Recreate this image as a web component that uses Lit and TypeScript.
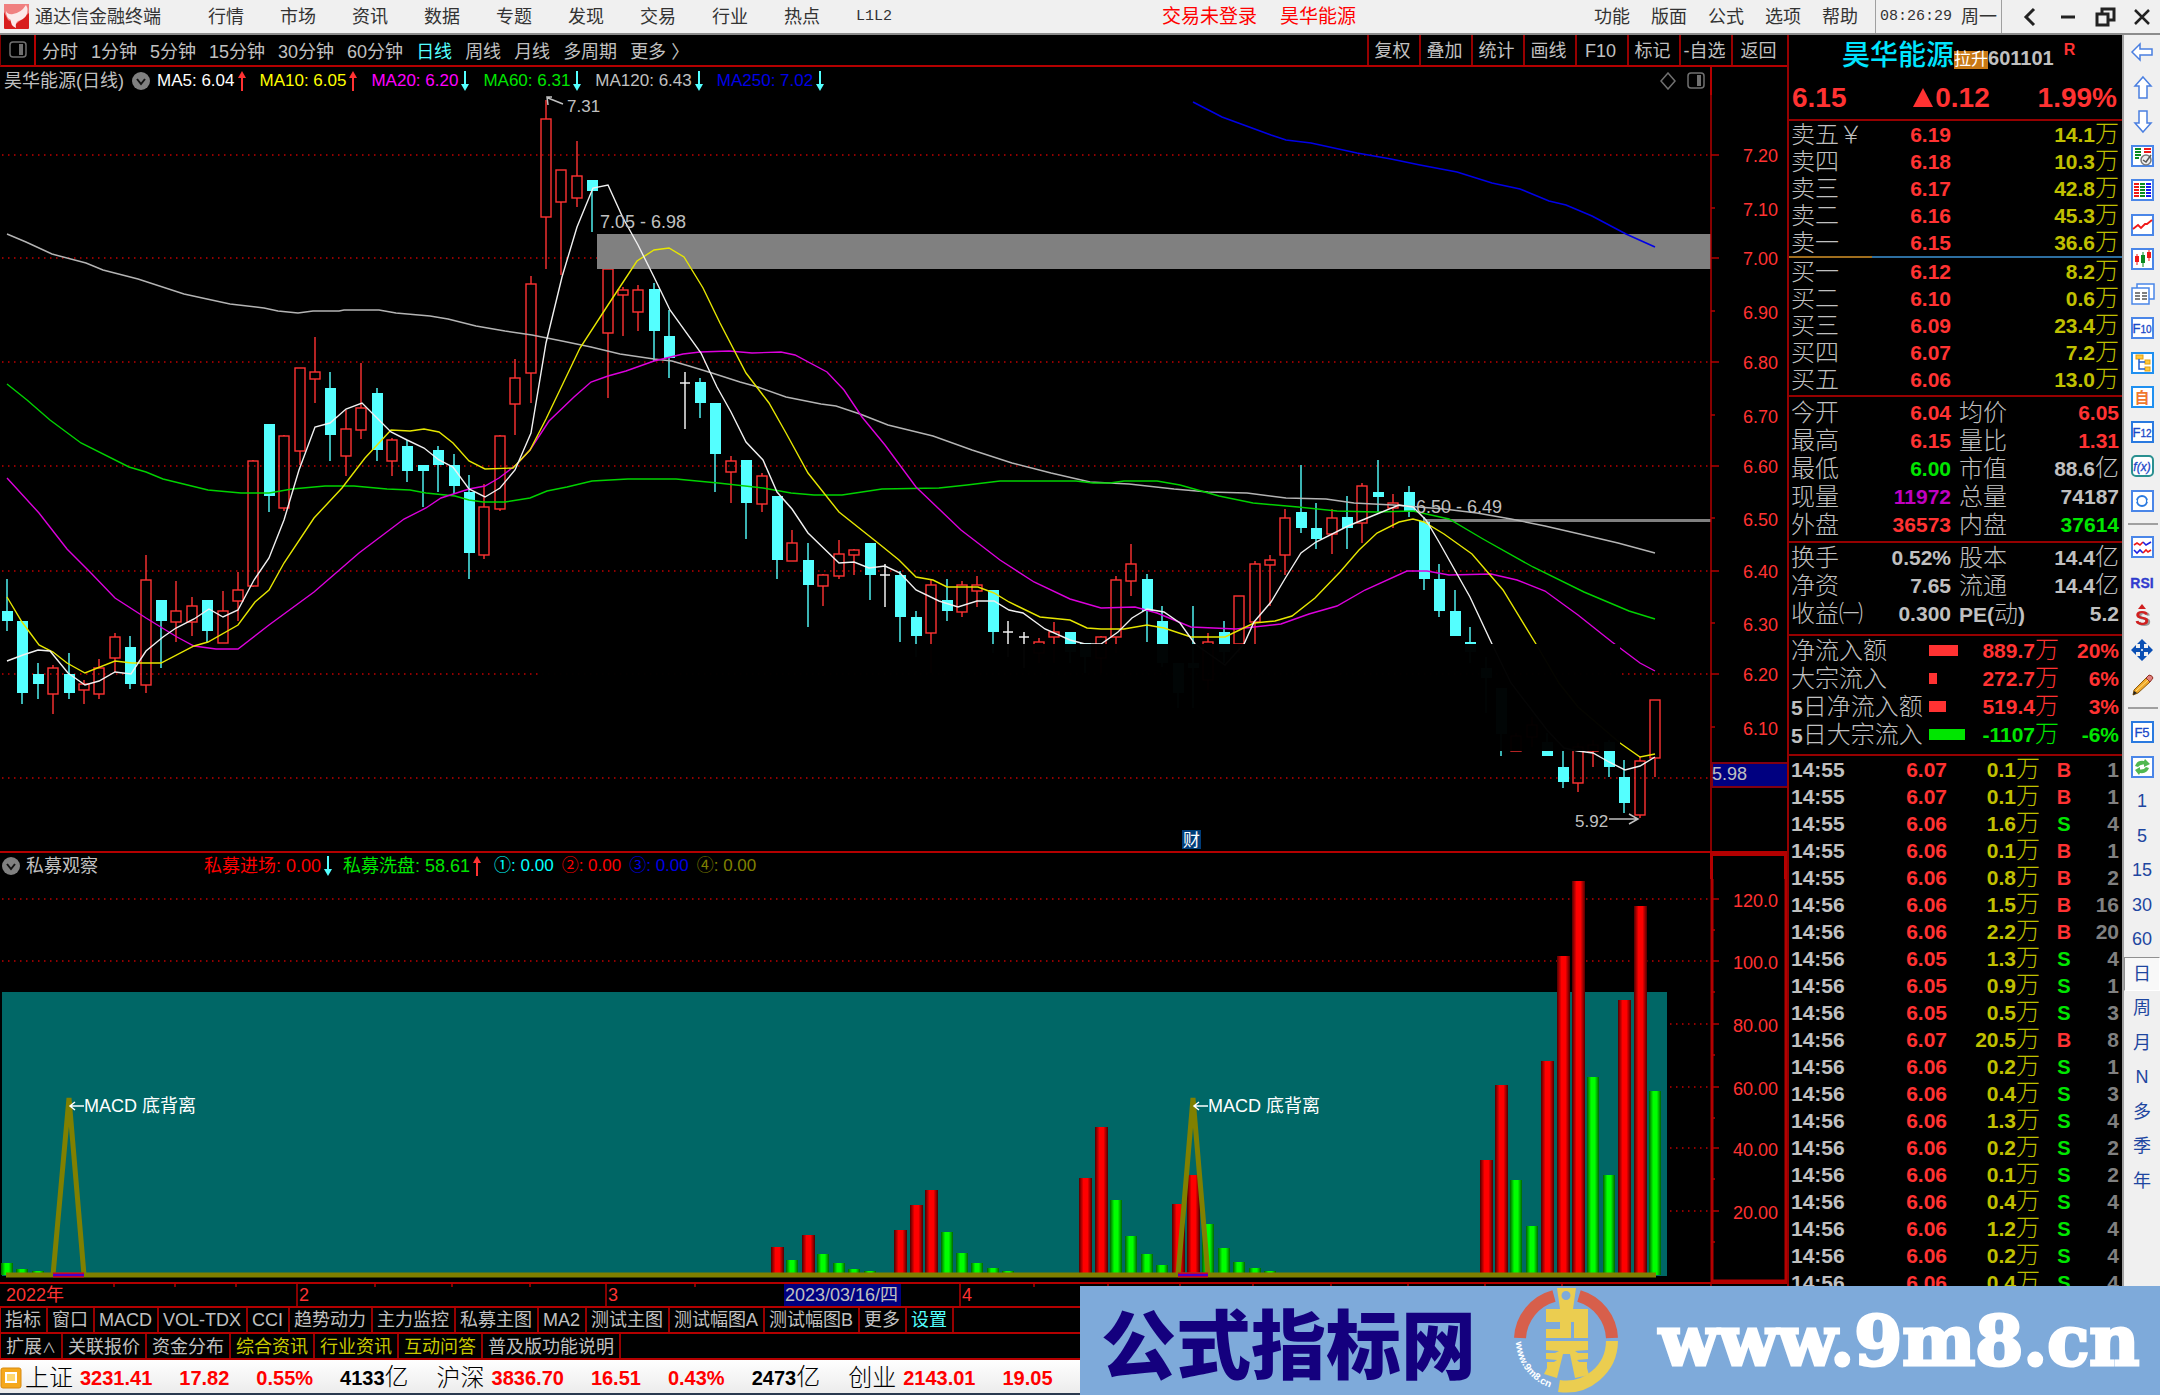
import { LitElement, html, svg, css, nothing } from "lit";
import { customElement } from "lit/decorators.js";
import { styleMap } from "lit/directives/style-map.js";

/* ---------- data ---------- */

type Candle = [kind: "u" | "d" | "x", high: number, top: number, bottom: number, low: number];

// One entry per session. Vertical units are thirds of a plot unit.
const CANDLES: Candle[] = [
  ["d", 1738, 1832, 1863, 1894], ["d", 1863, 1863, 2079, 2111], ["d", 1990, 2021, 2053, 2096],
  ["u", 1995, 2005, 2083, 2141], ["d", 1958, 2021, 2079, 2096], ["u", 2040, 2053, 2069, 2111],
  ["u", 1976, 2005, 2083, 2096], ["u", 1900, 1910, 1975, 2016], ["d", 1909, 1941, 2052, 2066],
  ["u", 1666, 1739, 2056, 2080], ["d", 1801, 1801, 1863, 2003], ["u", 1743, 1833, 1867, 1926],
  ["u", 1792, 1819, 1867, 1908], ["d", 1801, 1801, 1894, 1926], ["u", 1774, 1833, 1930, 1930],
  ["u", 1715, 1771, 1804, 1864], ["u", 1381, 1384, 1758, 1762], ["d", 1273, 1273, 1489, 1535],
  ["u", 1306, 1307, 1525, 1533], ["u", 1104, 1104, 1353, 1395], ["u", 1012, 1117, 1138, 1210],
  ["d", 1116, 1165, 1305, 1382], ["u", 1230, 1288, 1367, 1427], ["u", 1088, 1225, 1291, 1318],
  ["d", 1163, 1179, 1350, 1382], ["u", 1315, 1321, 1384, 1427], ["d", 1320, 1337, 1413, 1445],
  ["d", 1396, 1396, 1413, 1522], ["d", 1337, 1351, 1394, 1477], ["d", 1363, 1396, 1458, 1483],
  ["d", 1426, 1476, 1660, 1738], ["u", 1453, 1522, 1665, 1678], ["u", 1304, 1307, 1526, 1533],
  ["u", 1076, 1135, 1213, 1305], ["u", 828, 852, 1119, 1210], ["u", 300, 357, 651, 806],
  ["u", 510, 510, 606, 825], ["u", 423, 528, 594, 620], ["d", 540, 540, 572, 697],
  ["u", 806, 806, 998, 1193], ["u", 860, 870, 886, 1007], ["u", 855, 870, 935, 994],
  ["d", 850, 868, 994, 1084], ["d", 930, 1009, 1074, 1134], ["x", 1117, 1149, 1151, 1287],
  ["d", 1134, 1147, 1210, 1255], ["d", 1210, 1210, 1363, 1476], ["u", 1368, 1384, 1417, 1508],
  ["d", 1381, 1381, 1508, 1616], ["u", 1418, 1429, 1512, 1535], ["d", 1489, 1489, 1679, 1738],
  ["u", 1589, 1630, 1682, 1682], ["d", 1630, 1679, 1755, 1881], ["u", 1723, 1725, 1759, 1819],
  ["u", 1620, 1663, 1727, 1738], ["u", 1647, 1650, 1665, 1724], ["d", 1630, 1630, 1724, 1801],
  ["x", 1693, 1725, 1728, 1820], ["d", 1712, 1725, 1850, 1927], ["d", 1832, 1850, 1909, 1970],
  ["u", 1740, 1756, 1899, 2020], ["d", 1738, 1801, 1832, 1863], ["u", 1743, 1756, 1836, 1850],
  ["u", 1729, 1756, 1772, 1820], ["d", 1769, 1769, 1895, 1960], ["x", 1863, 1897, 1900, 1970],
  ["x", 1895, 1910, 1913, 2003], ["u", 1913, 1927, 1960, 1990], ["u", 1867, 1895, 1911, 1990],
  ["d", 1895, 1895, 1955, 1990], ["d", 1930, 1930, 1970, 2020], ["u", 1909, 1910, 1975, 2020],
  ["u", 1729, 1739, 1911, 1960], ["u", 1633, 1693, 1742, 1787], ["d", 1723, 1738, 1832, 1927],
  ["d", 1819, 1863, 1990, 2000], ["d", 1990, 1990, 2080, 2125], ["d", 1819, 1990, 2003, 2125],
  ["u", 1900, 1927, 2040, 2070], ["d", 1863, 1895, 1955, 1990], ["u", 1788, 1789, 1932, 1960],
  ["u", 1684, 1693, 1866, 1931], ["u", 1666, 1681, 1696, 1817], ["u", 1527, 1555, 1665, 1725],
  ["d", 1396, 1536, 1584, 1598], ["d", 1508, 1585, 1616, 1647], ["u", 1527, 1555, 1602, 1661],
  ["d", 1489, 1552, 1584, 1647], ["u", 1450, 1459, 1570, 1630], ["d", 1381, 1477, 1490, 1536],
  ["u", 1481, 1510, 1525, 1584], ["d", 1458, 1477, 1532, 1552], ["d", 1550, 1562, 1738, 1770],
  ["d", 1693, 1738, 1832, 1850], ["d", 1770, 1832, 1909, 1909], ["d", 1882, 1927, 1955, 1990],
  ["d", 1970, 2003, 2035, 2140], ["d", 2065, 2065, 2203, 2268], ["u", 2200, 2207, 2254, 2254],
  ["u", 2150, 2175, 2210, 2240], ["d", 2200, 2225, 2268, 2268], ["d", 2254, 2300, 2345, 2363],
  ["u", 2230, 2240, 2348, 2376], ["u", 2220, 2235, 2254, 2300], ["d", 2220, 2225, 2300, 2331],
  ["d", 2281, 2332, 2408, 2439], ["u", 2270, 2284, 2444, 2453], ["u", 2099, 2099, 2273, 2331],
];

const MA_LINES: { color: string; points: string }[] = [
  { color: "#0000e6", points: "1193,307 1222,350 1271,405 1286,420 1311,430 1357,460 1391,478 1420,495 1457,517 1492,548 1520,567 1549,603 1566,615 1592,648 1626,702 1655,741" },
  { color: "#b4b4b4", points: "7,703 26,725 52,762 86,790 103,811 138,838 184,883 230,911 264,925 278,934 298,938 313,934 339,934 344,929 379,929 396,938 430,947 448,957 476,979 505,993 532,1005 562,1022 591,1042 620,1062 654,1077 672,1083 689,1098 712,1120 740,1147 758,1162 786,1190 821,1212 836,1218 860,1243 888,1275 933,1308 972,1350 1012,1388 1051,1420 1090,1445 1129,1453 1174,1468 1208,1475 1247,1479 1286,1493 1326,1498 1354,1509 1393,1516 1444,1527 1477,1540 1511,1557 1545,1579 1584,1605 1618,1630 1655,1659" },
  { color: "#00d200", points: "7,1153 27,1200 50,1260 81,1330 129,1401 146,1415 163,1438 208,1469 241,1478 269,1478 292,1467 325,1457 354,1457 387,1468 410,1471 426,1480 455,1488 469,1500 483,1505 505,1505 530,1493 547,1473 567,1462 592,1443 628,1438 676,1438 718,1450 763,1465 791,1478 814,1484 842,1484 882,1466 939,1465 967,1454 1000,1443 1076,1443 1093,1448 1110,1448 1124,1443 1157,1443 1180,1456 1219,1487 1253,1510 1298,1521 1337,1532 1376,1537 1413,1532 1449,1558 1483,1618 1533,1700 1584,1777 1629,1833 1655,1857" },
  { color: "#dc00dc", points: "7,1433 39,1540 67,1647 90,1715 115,1795 146,1855 177,1910 194,1938 216,1946 238,1946 269,1875 314,1775 359,1660 404,1557 426,1525 441,1495 469,1467 485,1457 499,1435 516,1396 530,1350 549,1262 574,1190 591,1147 608,1128 626,1113 654,1083 683,1062 700,1055 729,1052 752,1058 781,1055 795,1065 827,1115 844,1170 862,1250 885,1335 916,1462 961,1590 1000,1680 1034,1745 1070,1798 1101,1825 1135,1820 1157,1840 1191,1880 1236,1887 1281,1872 1309,1842 1337,1817 1365,1770 1407,1714 1427,1714 1449,1725 1491,1722 1517,1741 1545,1773 1578,1845 1612,1925 1640,1989 1655,2012" },
  { color: "#e6e600", points: "7,1790 22,1865 39,1935 53,1955 67,1990 85,2018 115,1983 132,1988 161,1988 194,1938 208,1927 238,1875 255,1805 269,1770 284,1690 314,1555 342,1465 365,1375 391,1290 410,1294 424,1286 439,1295 453,1330 469,1383 485,1406 513,1404 530,1350 546,1258 580,1045 608,915 637,783 654,750 669,744 684,770 703,865 720,970 746,1120 769,1210 786,1300 808,1420 839,1535 878,1630 899,1680 916,1730 933,1740 947,1762 978,1762 994,1780 1009,1807 1040,1852 1070,1860 1087,1884 1101,1888 1124,1887 1147,1875 1164,1883 1191,1910 1225,1910 1254,1870 1275,1863 1292,1848 1315,1795 1340,1715 1359,1650 1377,1600 1399,1567 1413,1558 1424,1565 1444,1602 1472,1662 1503,1770 1536,1931 1559,2050 1578,2120 1620,2228 1640,2270 1655,2262" },
  { color: "#f0f0f0", points: "7,1983 23,1965 38,1950 50,1953 68,2020 85,2055 99,2042 115,2015 131,2023 146,1952 163,1910 176,1885 194,1858 209,1828 223,1851 238,1830 254,1740 269,1675 284,1560 299,1410 315,1280 330,1268 346,1226 362,1208 376,1250 391,1295 407,1320 424,1345 439,1380 453,1400 469,1467 485,1492 500,1465 515,1410 531,1300 546,1030 562,830 577,680 593,565 608,555 623,655 638,735 654,830 670,930 701,1060 717,1160 731,1235 746,1325 763,1380 777,1475 792,1527 808,1600 839,1690 854,1686 869,1703 885,1698 900,1720 916,1770 939,1803 958,1822 977,1803 994,1803 1009,1830 1023,1840 1045,1888 1070,1920 1085,1932 1101,1932 1118,1895 1132,1855 1147,1828 1164,1835 1180,1870 1195,1931 1225,1995 1244,1931 1254,1865 1271,1805 1286,1730 1301,1660 1316,1625 1348,1578 1377,1543 1399,1516 1413,1520 1426,1560 1439,1625 1470,1790 1492,1931 1511,2050 1547,2190 1564,2245 1578,2253 1593,2258 1609,2285 1625,2311 1640,2298 1655,2270" },
];

// [session index, top edge, rising?]
const BARS: [number, number, boolean][] = [
  [0, 1263, false], [1, 1269, false], [2, 1271, false],
  [50, 1247, true], [51, 1260, false], [52, 1235, true], [53, 1254, false], [54, 1263, false], [55, 1269, false], [56, 1271, false],
  [58, 1230, true], [59, 1205, true], [60, 1190, true], [61, 1232, false], [62, 1253, false], [63, 1263, false], [64, 1268, false], [65, 1271, false],
  [70, 1178, true], [71, 1127, true], [72, 1200, false], [73, 1236, false], [74, 1254, false], [75, 1265, false],
  [76, 1204, true], [77, 1175, true], [78, 1224, false], [79, 1248, false], [80, 1262, false], [81, 1268, false], [82, 1271, false],
  [96, 1160, true], [97, 1085, true], [98, 1180, false], [99, 1226, false], [100, 1061, true], [101, 956, true], [102, 881, true],
  [103, 1077, false], [104, 1175, false], [105, 1000, true], [106, 906, true], [107, 1091, false],
];

const PRICE_LABELS: [string, number][] = [
  ["7.20", 155], ["7.10", 208], ["7.00", 258], ["6.90", 311], ["6.80", 362], ["6.70", 415],
  ["6.60", 466], ["6.50", 518], ["6.40", 571], ["6.30", 623], ["6.20", 674], ["6.10", 727],
];
const SUB_LABELS: [string, number][] = [
  ["120.0", 899], ["100.0", 961], ["80.00", 1024], ["60.00", 1087], ["40.00", 1148], ["20.00", 1211],
];

const MENUS = ["行情", "市场", "资讯", "数据", "专题", "发现", "交易", "行业", "热点"];
const PERIODS = ["分时", "1分钟", "5分钟", "15分钟", "30分钟", "60分钟", "日线", "周线", "月线", "多周期", "更多 〉"];
const TOOLS = ["复权", "叠加", "统计", "画线", "F10", "标记", "-自选", "返回"];
const MAS: [string, string, boolean][] = [
  ["MA5: 6.04", "c-white", true], ["MA10: 6.05", "c-yel", true], ["MA20: 6.20", "c-mag", false],
  ["MA60: 6.31", "c-grn", false], ["MA120: 6.43", "c-gray", false], ["MA250: 7.02", "c-blue", false],
];
const TABS = ["指标", "窗口", "MACD", "VOL-TDX", "CCI", "趋势动力", "主力监控", "私募主图", "MA2", "测试主图", "测试幅图A", "测试幅图B", "更多", "设置"];
const TABS2 = ["扩展", "关联报价", "资金分布", "综合资讯", "行业资讯", "互动问答", "普及版功能说明"];

const SELLS = [["卖五￥", "6.19", "14.1"], ["卖四", "6.18", "10.3"], ["卖三", "6.17", "42.8"], ["卖二", "6.16", "45.3"], ["卖一", "6.15", "36.6"]];
const BUYS = [["买一", "6.12", "8.2"], ["买二", "6.10", "0.6"], ["买三", "6.09", "23.4"], ["买四", "6.07", "7.2"], ["买五", "6.06", "13.0"]];
const STATS = [
  ["今开", "6.04", "r", "均价", "6.05", "r"], ["最高", "6.15", "r", "量比", "1.31", "r"],
  ["最低", "6.00", "g", "市值", "88.6亿", "w"], ["现量", "11972", "m", "总量", "74187", "w"],
  ["外盘", "36573", "r", "内盘", "37614", "g"],
];
const STATS2 = [
  ["换手", "0.52%", "w", "股本", "14.4亿", "w"], ["净资", "7.65", "w", "流通", "14.4亿", "w"],
  ["收益㈠", "0.300", "w", "PE(动)", "5.2", "w"],
];
const FLOWS: [string, number, string, string, string][] = [
  ["净流入额", 29, "889.7", "20%", "r"], ["大宗流入", 8, "272.7", "6%", "r"],
  ["5日净流入额", 17, "519.4", "3%", "r"], ["5日大宗流入", 36, "-1107", "-6%", "g"],
];
const TICKS = [
  "14:55 6.07 0.1 B 1", "14:55 6.07 0.1 B 1", "14:55 6.06 1.6 S 4", "14:55 6.06 0.1 B 1", "14:55 6.06 0.8 B 2",
  "14:56 6.06 1.5 B 16", "14:56 6.06 2.2 B 20", "14:56 6.05 1.3 S 4", "14:56 6.05 0.9 S 1", "14:56 6.05 0.5 S 3",
  "14:56 6.07 20.5 B 8", "14:56 6.06 0.2 S 1", "14:56 6.06 0.4 S 3", "14:56 6.06 1.3 S 4", "14:56 6.06 0.2 S 2",
  "14:56 6.06 0.1 S 2", "14:56 6.06 0.4 S 4", "14:56 6.06 1.2 S 4", "14:56 6.06 0.2 S 4", "14:56 6.06 0.4 S 4",
].map((t) => t.split(" "));

const INDICES = [
  ["上证", "3231.41", "17.82", "0.55%", "4133"],
  ["沪深", "3836.70", "16.51", "0.43%", "2473"],
  ["创业", "2143.01", "19.05", "", ""],
];

/* ---------- helpers ---------- */

const FIRST_X = 7;
const STEP = 1648 / 107;
const cx = (k: number) => Math.round(FIRST_X + k * STEP);
const cy = (v: number) => Math.round(v / 3);
const linePoints = (s: string) =>
  s.split(" ").map((p) => { const [x, y] = p.split(",").map(Number); return `${x},${cy(y)}`; }).join(" ");

const frame = (stroke = "#4a86e8") => svg`<rect x="2" y="2" width="21" height="20" fill="#fff" stroke=${stroke} stroke-width="2"/>`;

const STRIP_ICONS: [string, unknown][] = [
  ["后退", svg`<path d="M2 12 L10 4 V9 H22 V15 H10 V20 Z" fill="#fff" stroke="#4a7fe0" stroke-width="1.5"/>`],
  ["上移", svg`<path d="M13 2 L21 11 H17 V23 H9 V11 H5 Z" fill="#fff" stroke="#4a7fe0" stroke-width="1.5"/>`],
  ["下移", svg`<path d="M13 23 L21 14 H17 V2 H9 V14 H5 Z" fill="#fff" stroke="#4a7fe0" stroke-width="1.5"/>`],
  ["报价", svg`${frame()}<path d="M5 5H11M5 8H11M5 11H11M5 14H9" stroke="#0a8a20" stroke-width="2"/><path d="M14 5H21M14 8H21" stroke="#f01818" stroke-width="2"/><circle cx="16" cy="16" r="5" fill="#eee" stroke="#777" stroke-width="1.5"/><path d="M13 16L16 18L21 11" fill="none" stroke="#555" stroke-width="1.5"/>`],
  ["列表", svg`${frame()}<path d="M4 6H9M4 9H9M4 12H9M4 15H9M4 18H9" stroke="#f01818" stroke-width="2"/><path d="M10 6H15M10 9H15M10 12H15M10 15H15M10 18H15" stroke="#0a8a20" stroke-width="2"/><path d="M16 6H21M16 9H21M16 12H21M16 15H21M16 18H21" stroke="#1818f0" stroke-width="2"/>`],
  ["分时", svg`${frame()}<path d="M3 16L8 12L11 15L15 11L17 11L22 7" fill="none" stroke="#f01818" stroke-width="1.8"/>`],
  ["K线", svg`${frame()}<path d="M7 7V18M19 3V14" stroke="#f01818"/><path d="M13 5V20" stroke="#0a8a20"/><rect x="5" y="9" width="4" height="6" fill="#f01818"/><rect x="11" y="8" width="4" height="8" fill="#0a8a20"/><rect x="17" y="5" width="4" height="6" fill="#f01818"/>`],
  ["窗口", svg`<rect x="7" y="2" width="17" height="15" fill="#fff" stroke="#4a86e8" stroke-width="1.5"/><rect x="2" y="6" width="17" height="16" fill="#fff" stroke="#4a86e8" stroke-width="1.5"/><path d="M5 11H10M5 14H10M5 17H10M12 11H17M12 14H17M12 17H17" stroke="#555" stroke-width="1.5"/>`],
  ["F10", svg`${frame()}<text x="12" y="17" text-anchor="middle" class="ic"><tspan class="big">F</tspan>10</text>`],
  ["树", svg`${frame("#2090f0")}<rect x="6" y="4" width="7" height="4" fill="#ffc83c" stroke="#e0a010"/><rect x="15" y="9" width="5" height="4" fill="#ffc83c" stroke="#e0a010"/><rect x="15" y="16" width="5" height="4" fill="#ffc83c" stroke="#e0a010"/><path d="M9 8V18H15M9 11H15" fill="none" stroke="#2060d0" stroke-width="1.5"/>`],
  ["自选", svg`${frame("#2090f0")}<text x="12" y="18" text-anchor="middle" class="ic self">自</text>`],
  ["F12", svg`${frame("#2a7ae0")}<text x="12" y="17" text-anchor="middle" class="ic"><tspan class="big">F</tspan>12</text>`],
  ["公式", svg`<rect x="2" y="2" width="21" height="20" rx="4" fill="#fff" stroke="#2a9090" stroke-width="2"/><text x="12" y="17" text-anchor="middle" class="ic fx">f(x)</text>`],
  ["刷新", svg`${frame()}<circle cx="12" cy="12" r="5" fill="none" stroke="#2a7ae0" stroke-width="2"/><path d="M7 12H5M17 12H19" stroke="#fff" stroke-width="1.500"/>`],
];
const STRIP_ICONS2: [string, unknown][] = [
  ["波动", svg`${frame()}<path d="M4 10L7 8L10 10L13 7" fill="none" stroke="#f01818" stroke-width="1.6"/><path d="M13 7L16 10L21 7" fill="none" stroke="#2020e0" stroke-width="1.6"/><path d="M4 15L7 18L10 15L13 18" fill="none" stroke="#2020e0" stroke-width="1.6"/><path d="M13 18L16 15L18 17L21 15" fill="none" stroke="#f01818" stroke-width="1.6"/>`],
  ["RSI", svg`<text x="12" y="18" text-anchor="middle" class="ic rsi">RSI</text>`],
  ["资金", svg`<text x="12" y="21" text-anchor="middle" class="ic dollar">S</text><path d="M8 5L12 0L16 5Z" fill="#d02020"/>`],
  ["移动", svg`<path d="M12 1L17 6H14V10H18V7L23 12L18 17V14H14V18H17L12 23L7 18H10V14H6V17L1 12L6 7V10H10V6H7Z" fill="#0a4fb4"/><circle cx="12" cy="12" r="1" fill="#fff"/>`],
  ["画笔", svg`<path d="M3 22L4 17L16 5L20 9L8 20Z" fill="#f0a828" stroke="#8a5a10"/><path d="M16 5L19 2Q22 2 23 5L20 9Z" fill="#e08080" stroke="#903020"/><path d="M3 22L4 18L7 20Z" fill="#222"/><path d="M6 18L18 7" stroke="#ffe080"/>`],
];
const STRIP_ICONS3: [string, unknown][] = [
  ["F5", svg`${frame("#2a7ae0")}<text x="12" y="17" text-anchor="middle" class="ic"><tspan class="big">F5</tspan></text>`],
  ["同步", svg`${frame()}<path d="M5 11Q7 5 14 6L15 4L20 9L14 12V9.500Q10 9 8 12Z" fill="#50b850"/><path d="M19 13Q17 19 10 18L9 20L5 15L10 12V14.500Q14 15 16 12Z" fill="#50b850"/>`],
];
const STRIP_TEXT = ["1", "5", "15", "30", "60", "日", "周", "月", "N", "多", "季", "年"];

const stripIcon = ([label, art]: [string, unknown]) =>
  html`<button class="sbtn" aria-label=${label}><svg viewBox="0 0 25 24" width="25" height="24" aria-hidden="true">${art}</svg></button>`;

const arrow = (up: boolean) => html`<svg class="arrow" viewBox="0 0 8 20" width="8" height="20" aria-hidden="true">${
  up ? svg`<path d="M4 20V4" stroke="#ff3232" stroke-width="2"/><path d="M0 7L4 0L8 7Z" fill="#ff3232"/>`
     : svg`<path d="M4 0V16" stroke="#54ffff" stroke-width="2"/><path d="M0 13L4 20L8 13Z" fill="#54ffff"/>`}</svg>`;

const chevron = html`<svg viewBox="0 0 18 18" width="18" height="18" aria-hidden="true"><circle cx="9" cy="9" r="9" fill="#808080"/><path d="M5 7L9 12L13 7" fill="none" stroke="#111" stroke-width="2"/></svg>`;

const amount = (v: string) => html`${v}<span class="cjk">万</span>`;
const withUnit = (v: string) => (v.endsWith("亿") ? html`${v.slice(0, -1)}<span class="cjk">亿</span>` : v);
const rowLabel = (v: string) => {
  if (v.startsWith("PE")) return html`<b class="lat">PE(</b>动<b class="lat">)</b>`;
  return v.startsWith("5") ? html`<b class="lat">5</b>${v.slice(1)}` : v;
};

/* ---------- charts ---------- */

@customElement("price-chart")
class PriceChart extends LitElement {
  static styles = css`
    :host { display: block; }
    svg { display: block; width: 100%; height: auto; }
    text { font-family: "Liberation Sans", "Noto Sans CJK SC", sans-serif; font-size: 18px; }
    .note { fill: #c0c0c0; font-size: 17px; }
    .gap { font-size: 18px; }
    .axis { fill: #ff3232; }
    .badge { fill: #fff; font-size: 17px; }
  `;

  private candle(c: Candle, k: number) {
    const [kind, h, t, b, l] = c;
    const x = cx(k);
    const [yh, yt, yb, yl] = [h, t, b, l].map(cy);
    if (kind === "x")
      return svg`<path d="M${x} ${yh}V${yl}M${x - 5} ${yt}H${x + 5}" stroke="#f0f0f0" stroke-width="1.5"/>`;
    const color = kind === "u" ? "#ff3232" : "#54ffff";
    return svg`<path d="M${x} ${yh}V${yt}M${x} ${yb}V${yl}" stroke=${color} stroke-width="1.4"/>${
      kind === "u"
        ? svg`<rect x=${x - 5} y=${yt} width="10" height=${Math.max(yb - yt, 3)} fill="none" stroke=${color} stroke-width="1.4"/>`
        : svg`<rect x=${x - 5} y=${yt} width="11" height=${Math.max(yb - yt, 3)} fill=${color}/>`}`;
  }

  render() {
    return html`<svg viewBox="0 95 1787 756" role="img" aria-label="日线图">
      <rect x="0" y="95" width="1787" height="756" fill="#000"/>
      ${[155, 258, 362, 466, 571, 674, 778].map((y) => svg`<path d="M2 ${y}H1711" stroke="#c00000" stroke-width="1.4" stroke-dasharray="1.500 4.500"/>`)}
      ${CANDLES.map((c, k) => this.candle(c, k))}
      <rect x="597" y="234" width="1114" height="35" fill="#808080"/>
      <rect x="1424" y="519" width="287" height="3" fill="#808080"/>
      ${MA_LINES.slice(1).map((m) => svg`<polyline points=${linePoints(m.points)} fill="none" stroke=${m.color} stroke-width="1.4"/>`)}
      <rect x="538" y="644" width="1082" height="107" fill="#000" fill-opacity="0.98"/>
      ${MA_LINES.slice(0, 1).map((m) => svg`<polyline points=${linePoints(m.points)} fill="none" stroke=${m.color} stroke-width="1.6"/>`)}
      <path d="M548 105L547 97H552M548 98L563 104" fill="none" stroke="#c0c0c0" stroke-width="1.5"/>
      <text class="note" x="567" y="112">7.31</text>
      <text class="note gap" x="600" y="228">7.05 - 6.98</text>
      <text class="note gap" x="1416" y="513">6.50 - 6.49</text>
      <text class="note" x="1575" y="827">5.92</text>
      <path d="M1609 819H1637M1629 814L1638 819L1629 824" fill="none" stroke="#c0c0c0" stroke-width="1.5"/>
      <rect x="1182" y="830" width="19" height="19" fill="#003c78"/>
      <text class="badge" x="1183" y="846">财</text>
      <path d="M1711 95V851" stroke="#b40000" stroke-width="1.5"/>
      ${PRICE_LABELS.map(([t, y], i) => svg`<path d="M1711 ${y}H${i % 2 ? 1715 : 1719}" stroke="#b40000" stroke-width="1.500"/><text class="axis" x="1778" y=${y + (i % 2 ? 8 : 7)} text-anchor="end">${t}</text>`)}
      <rect x="1712" y="763" width="76" height="24" fill="#000080" stroke="#800010" stroke-width="2"/>
      <text class="note gap" x="1712" y="780">5.98</text>
    </svg>`;
  }
}

@customElement("volume-chart")
class VolumeChart extends LitElement {
  static styles = css`
    :host { display: block; }
    svg { display: block; width: 100%; height: auto; }
    text { font-family: "Liberation Sans", "Noto Sans CJK SC", sans-serif; font-size: 18px; fill: #ff3232; }
    .mark { fill: #fff; }
  `;

  render() {
    const peaks = [4, 77];
    return html`<svg viewBox="0 879 1787 403" role="img" aria-label="私募观察">
      <defs>
        <linearGradient id="up"><stop offset="0" stop-color="#500000"/><stop offset="0.35" stop-color="#f00"/><stop offset="0.65" stop-color="#f00"/><stop offset="1" stop-color="#500000"/></linearGradient>
        <linearGradient id="down"><stop offset="0" stop-color="#006400"/><stop offset="0.35" stop-color="#0f0"/><stop offset="0.65" stop-color="#0f0"/><stop offset="1" stop-color="#006400"/></linearGradient>
      </defs>
      <rect x="0" y="879" width="1787" height="403" fill="#000"/>
      ${SUB_LABELS.map(([, y]) => svg`<path d="M2 ${y}H1711" stroke="#c00000" stroke-width="1.4" stroke-dasharray="1.500 4.500"/>`)}
      <rect x="2" y="992" width="1665" height="284" fill="#006766"/>
      ${BARS.map(([k, top, up]) => svg`<rect x=${cx(k) - 6} y=${top} width=${up ? 13 : 12} height=${1275 - top} fill=${up ? "url(#up)" : "url(#down)"}/>`)}
      <path d="M6 1275H1656" stroke="#808000" stroke-width="5"/>
      ${peaks.map((k) => svg`
        <path d="M${cx(k - 1)} 1275L${cx(k)} 1098L${cx(k + 1)} 1275" fill="none" stroke="#808000" stroke-width="5" stroke-linejoin="bevel"/>
        <path d="M${cx(k - 1)} 1275H${cx(k + 1)}" stroke="#c80032" stroke-width="5"/><path d="M${cx(k - 1)} 1275H${cx(k + 1)}" stroke="#2000ff" stroke-width="1.500"/>
        <path d="M${cx(k) + 1} 1106H${cx(k) + 15}M${cx(k) + 6} 1102L${cx(k) + 1} 1106L${cx(k) + 6} 1110" fill="none" stroke="#fff" stroke-width="1.500"/>
        <text class="mark" x=${cx(k) + 15} y="1112">MACD 底背离</text>`)}
      <rect x="1712" y="870" width="74" height="411" fill="none" stroke="#b40000" stroke-width="3"/>
      ${SUB_LABELS.map(([t, y]) => svg`<path d="M1711 ${y}H1719M1711 ${y + 31}H1715" stroke="#b40000" stroke-width="1.500"/><text x="1778" y=${y + 8} text-anchor="end">${t}</text>`)}
    </svg>`;
  }
}

@customElement("date-axis")
class DateAxis extends LitElement {
  static styles = css`
    :host { display: block; }
    svg { display: block; width: 100%; height: auto; }
    text { font-family: "Liberation Sans", "Noto Sans CJK SC", sans-serif; font-size: 18px; fill: #ff3232; }
    .sel { fill: #c0c0c0; }
  `;
  render() {
    return html`<svg viewBox="0 0 1787 24" role="img" aria-label="日期">
      <rect width="1787" height="24" fill="#000"/>
      <path d="M0 1H1787" stroke="#b40000" stroke-width="2"/>
      <path d="M297 1V24M606 1V24M960 1V24M1711 1V24" stroke="#b40000" stroke-width="1.500"/>
      ${[114, 175, 236, 375, 452, 530, 695, 1034, 1108, 1180, 1253, 1331, 1408, 1485, 1562].map((x) => svg`<path d="M${x} 1V5" stroke="#b40000" stroke-width="1.500"/>`)}
      <rect x="784" y="2" width="117" height="22" fill="#000080"/>
      <text x="6" y="19">2022年</text><text x="299" y="19">2</text><text x="608" y="19">3</text><text x="962" y="19">4</text>
      <text class="sel" x="785" y="19">2023/03/16/四</text>
    </svg>`;
  }
}

/* ---------- page ---------- */

@customElement("app-root")
class AppRoot extends LitElement {
  static styles = css`
    :host { display: block; position: relative; }
    * { box-sizing: border-box; }
    button { all: unset; box-sizing: border-box; cursor: pointer; white-space: nowrap; }
    .page { display: flex; flex-direction: column; min-height: 100vh; background: #000; color: #c0c0c0;
      font-family: "Liberation Sans", "Noto Sans CJK SC", sans-serif; font-size: 18px; overflow: hidden; }
    .c-white { color: #fff; } .c-yel { color: #ffff00; } .c-mag { color: #ff00ff; } .c-grn { color: #00e600; }
    .c-gray { color: #c0c0c0; } .c-blue { color: #0000e6; } .c-red { color: #ff0000; } .c-cyan { color: #00ffff; } .c-olive { color: #808000; }

    .menubar { display: flex; align-items: center; height: 35px; background: #f0f0f0; color: #333; border-bottom: 2px solid #8c8c8c; line-height: 20px; padding: 0 7px 0 4px; }
    .brand { display: flex; align-items: center; gap: 6px; width: 186px; }
    .menu { width: 72px; padding-left: 18px; text-align: left; }
    .mono { font-family: "Liberation Mono", monospace; font-size: 15px; }
    .account { display: flex; gap: 23px; color: #ff0000; font-size: 19px; margin-left: auto; padding-left: 14px; }
    .sysmenu { display: flex; gap: 21px; margin-left: auto; padding-right: 17px; }
    .clock { display: flex; gap: 9px; align-items: center; height: 33px; border: 1px solid #a0a0a0; border-width: 0 1px; padding: 0 4px; }
    .winbtns { display: flex; align-items: center; gap: 15px; padding-left: 18px; }
    .winbtns svg, .brand svg { display: block; }

    .work { display: grid; grid-template-columns: minmax(0, 1fr) 335px 38px; flex: 1; }
    .left { min-width: 0; }
    .toolbar { display: flex; align-items: center; height: 32px; border-bottom: 2px solid #b40000; border-left: 1px solid #800000; line-height: 20px; }
    .panelbtn { display: flex; align-items: center; justify-content: center; width: 35px; height: 100%; border-right: 2px solid #b40000; }
    .periods { display: flex; gap: 13px; padding: 3px 0 0 6px; }
    .on { color: #54ffff; }
    .tools { display: flex; margin-left: auto; height: 100%; }
    .tool { width: 52px; height: 100%; line-height: 33px; text-align: center; border-left: 2px solid #960000; padding-right: 3px; }
    .tool:last-child { width: 56px; }

    .legend { display: flex; align-items: center; height: 28px; line-height: 20px; padding-left: 4px; }
    .legend .name { display: flex; align-items: center; gap: 8px; }
    .items { display: flex; align-items: center; gap: 14px; font-size: 17px; padding-left: 7px; }
    .item { display: flex; align-items: center; gap: 3px; white-space: nowrap; }
    .tail { display: flex; align-items: center; gap: 10px; margin-left: auto; height: 100%; padding-right: 5px; }
    .axiscol { width: 77px; height: 100%; border-left: 2px solid #b40000; }
    .sub { border-top: 2px solid #b40000; padding-left: 2px; }
    .sub .name { gap: 6px; width: 202px; }
    .sub .items { padding-left: 0; gap: 11px; font-size: 18px; }
    .sub .items.marks { gap: 8px; padding-left: 13px; font-size: 17px; }
    .sub .axiscol { border: 3px solid #b40000; border-bottom: 0; margin-left: auto; }

    .tabs { display: flex; height: 26px; border-top: 2px solid #b40000; border-left: 1px solid #b40000; line-height: 25px; font-size: 18px; }
    .tab { padding: 0 5px 0 4px; border-right: 2px solid #960000; }
    .tabs.ext { line-height: 26px; }
    .ext .tab { padding-left: 5px; }
    .hot { color: #c8c800; }
    .caret { font-size: 14px; }

    .quote { border-left: 2px solid #960000; background: #000; overflow: hidden; }
    .stock { display: flex; align-items: center; height: 38px; padding-left: 53px; white-space: nowrap; }
    .sname { font-size: 28px; line-height: 38px; font-weight: 500; color: #00e5ff; padding-top: 3px; }
    .stag { background: #c87814; color: #fff; font-size: 17px; line-height: 18px; margin-top: 11px; }
    .scode { font-weight: 700; font-size: 20px; margin-top: 8px; }
    .sr { color: #ff3232; font-weight: 700; font-size: 16px; margin: 0 0 8px 10px; }
    .price { display: grid; grid-template-columns: 1fr 1fr 1fr; height: 46px; line-height: 50px; color: #ff3232; font-weight: 700; font-size: 28px; padding: 0 5px 0 3px; white-space: nowrap; }
    .price span:last-child { text-align: right; }
    .change { display: flex; align-items: center; justify-content: center; gap: 2px; padding-right: 6px; }
    table { border-collapse: collapse; width: 100%; table-layout: fixed; font-size: 21px; font-weight: 700; }
    th, td { padding: 0; text-align: right; height: 27px; line-height: 26px; white-space: nowrap; font-weight: 700; }
    th { text-align: left; font-weight: 300; font-size: 24px; padding-left: 2px; }
    .cjk { font-size: 24px; font-weight: 300; line-height: 0; }
    .lat { font-size: 21px; line-height: 0; font-weight: 700; }
    td.last { padding-right: 3px; }
    .w1 { width: 80px; } .wp { width: 82px; } .ws { width: 90px; }
    .blk { border-top: 2px solid #960000; }
    .book { height: 137px; }
    .book.buy { border-top: 2px solid #2d6ea0; border-image: linear-gradient(90deg, #a06e1e 25%, #2d6ea0 25%) 1; height: 139px; }
    .stats td, .stats th { height: 28px; line-height: 27px; }
    .s5 { height: 146px; padding-top: 1px; } .s3 { height: 93px; } .s4 { height: 120px; }
    th.k2 { padding-left: 8px; }
    .r { color: #ff3232; } .g { color: #00e600; } .m { color: #c000c0; } .w { color: #c0c0c0; } .y { color: #c0c000; }
    .bar { height: 11px; background: currentColor; }
    .wl { width: 140px; } .wb { width: 38px; } .wv { width: 92px; }
    td.side { text-align: center; font-size: 20px; }
    .cnt { color: #808080; }
    .wt { width: 68px; } .wtp { width: 90px; } .wtv { width: 93px; } .wside { width: 48px; }
    td.time { text-align: left; padding-left: 2px; }

    .strip { background: #f0f0f0; border-left: 2px solid #a0a0a0; color: #1e46a0; }
    .sgrp { display: grid; grid-auto-rows: 1fr; height: 483px; }
    .sgrp.mid { height: 186px; border: 1px solid #a0a0a0; border-width: 2px 0; padding: 5px 0; margin: 5px 2px 6px 4px; }
    .sgrp.mid .sbtn { margin-left: -2px; }
    .sbtn { display: flex; align-items: center; justify-content: center; font-size: 18px; line-height: 20px; }
    .sbtn svg { overflow: visible; }
    .sbtn.sel { background: #f8f8f8; border: 1px solid #909090; border-color: #909090 #fff #fff #909090; }
    .ic { font: 10px "Liberation Sans", sans-serif; fill: #1a48c8; stroke: #1a48c8; stroke-width: 0.3; }
    .ic .big { font-size: 13px; }
    .self { font: 700 15px "Noto Sans CJK SC", sans-serif; fill: #f07830; stroke: none; }
    .fx { font: italic 12px "Liberation Sans", sans-serif; }
    .rsi { font: 700 14px "Liberation Sans", sans-serif; fill: #3838d0; }
    .dollar { font: 700 21px "Liberation Sans", sans-serif; fill: #d02020; stroke: none; filter: drop-shadow(2px 1px 0 #999); }

    .status { display: flex; align-items: center; height: 37px; background: linear-gradient(#fff, #ececec); border-top: 2px solid #b40000; border-bottom: 2px solid #2a3a50; color: #000; line-height: 30px; white-space: nowrap; padding-top: 2px; }
    .idx { display: flex; align-items: center; font-size: 20px; font-weight: 700; padding-right: 28px; gap: 27px; }
    .idx .up { color: #ff0000; } .idx .nm { font-size: 24px; font-weight: 300; margin-right: -20px; }
    .sicon { margin-right: 3px; }

    .banner { position: absolute; right: 0; bottom: 0; width: 50%; height: 109px; display: flex; align-items: center; background: #7eaada; overflow: hidden; white-space: nowrap; padding-left: 21px; }
    .site { font: 900 75px/109px "Noto Sans CJK SC", sans-serif; color: #14007e; }
    .seal { margin-left: 34px; flex: none; }
    .sealtxt { font: 700 10px "Liberation Sans", sans-serif; fill: #fff; }
    .url { font: 700 69px/103px "DejaVu Serif", serif; color: #fff; -webkit-text-stroke: 3px #fff; margin-left: 37px; text-decoration: none; }
  `;

  private bookTable(rows: string[][], label: string) {
    return html`<table aria-label=${label}><colgroup><col class="w1"><col class="wp"><col></colgroup>
      ${rows.map(([n, p, v]) => html`<tr><th scope="row">${n}</th><td class="r">${p}</td><td class="y last">${amount(v)}</td></tr>`)}</table>`;
  }

  private statTable(rows: string[][], label: string) {
    return html`<table class="stats" aria-label=${label}><colgroup><col class="w1"><col class="wp"><col class="ws"><col></colgroup>
      ${rows.map(([a, b, bc, c, d, dc]) => html`<tr><th scope="row">${a}</th><td class=${bc}>${b}</td><th scope="row" class="k2">${rowLabel(c)}</th><td class="${dc} last">${withUnit(d)}</td></tr>`)}</table>`;
  }

  render() {
    return html`<div class="page">
      <header class="menubar">
        <div class="brand">
          <svg viewBox="0 0 25 25" width="25" height="25" aria-hidden="true"><rect width="25" height="25" rx="1" fill="#d81e1e"/><path d="M0 0H25V9L12 20L4 16L0 8Z" fill="#f08080"/><path d="M2 7Q4 11 9 10Q17 9 22 1Q25 6 22 12Q19 16 14 17Q11 19 12 24Q6 21 7 16Q2 14 2 7Z" fill="#fbeaea"/></svg>
          <span>通达信金融终端</span>
        </div>
        ${MENUS.map((m) => html`<button class="menu">${m}</button>`)}
        <button class="menu mono">L1L2</button>
        <div class="account"><span>交易未登录</span><span>昊华能源</span></div>
        <div class="sysmenu">${["功能", "版面", "公式", "选项", "帮助"].map((m) => html`<button>${m}</button>`)}</div>
        <div class="clock"><span class="mono">08:26:29</span><span>周一</span></div>
        <div class="winbtns">
          <button aria-label="收起"><svg width="22" height="20" viewBox="0 0 22 20"><path d="M14 2L6 10L14 18" fill="none" stroke="#222" stroke-width="3"/></svg></button>
          <button aria-label="最小化"><svg width="22" height="20" viewBox="0 0 22 20"><path d="M4 10H18" stroke="#222" stroke-width="3"/></svg></button>
          <button aria-label="还原"><svg width="22" height="20" viewBox="0 0 22 20"><path d="M8 6V2H20V13H15" fill="none" stroke="#222" stroke-width="3"/><rect x="3" y="7" width="11" height="11" fill="none" stroke="#222" stroke-width="3"/></svg></button>
          <button aria-label="关闭"><svg width="22" height="20" viewBox="0 0 22 20"><path d="M4 3L18 17M18 3L4 17" stroke="#222" stroke-width="2.500"/></svg></button>
        </div>
      </header>
      <div class="work">
        <main class="left">
          <nav class="toolbar">
            <button class="panelbtn" aria-label="侧栏"><svg width="18" height="18" viewBox="0 0 18 18"><rect x="1" y="1" width="16" height="15" rx="3" fill="none" stroke="#707070" stroke-width="1.500"/><rect x="10" y="3" width="4" height="11" fill="#707070"/></svg></button>
            <div class="periods">${PERIODS.map((p) => html`<button class=${p === "日线" ? "on" : nothing}>${p}</button>`)}</div>
            <div class="tools">${TOOLS.map((t) => html`<button class="tool">${t}</button>`)}</div>
          </nav>
          <div class="legend">
            <div class="name"><span>昊华能源(日线)</span>${chevron}</div>
            <div class="items">${MAS.map(([t, c, up]) => html`<span class="item ${c}">${t}${arrow(up)}</span>`)}</div>
            <div class="tail">
              <svg width="18" height="18" viewBox="0 0 18 18" aria-hidden="true"><path d="M9 1L16 9L9 17L2 9Z" fill="none" stroke="#707070" stroke-width="1.500"/></svg>
              <svg width="18" height="18" viewBox="0 0 18 18" aria-hidden="true"><rect x="1" y="1" width="16" height="15" rx="3" fill="none" stroke="#707070" stroke-width="1.500"/><rect x="10" y="3" width="4" height="11" fill="#707070"/></svg>
            </div>
            <div class="axiscol"></div>
          </div>
          <price-chart></price-chart>
          <div class="legend sub">
            <div class="name">${chevron}<span>私募观察</span></div>
            <div class="items"><span class="item c-red">私募进场: 0.00 ${arrow(false)}</span><span class="item c-grn">私募洗盘: 58.61 ${arrow(true)}</span></div>
            <div class="items marks"><span class="c-cyan">①: 0.00</span><span class="c-red">②: 0.00</span><span class="c-blue">③: 0.00</span><span class="c-olive">④: 0.00</span></div>
            <div class="axiscol"></div>
          </div>
          <volume-chart></volume-chart>
          <date-axis></date-axis>
          <nav class="tabs">${TABS.map((t) => html`<button class="tab ${t === "设置" ? "on" : ""}">${t}</button>`)}</nav>
          <nav class="tabs ext">${TABS2.map((t, i) => html`<button class="tab ${i > 2 && i < 6 ? "hot" : ""}">${t}${i === 0 ? html`<span class="caret">∧</span>` : nothing}</button>`)}</nav>
        </main>
        <aside class="quote">
          <div class="stock"><span class="sname">昊华能源</span><span class="stag">拉升</span><span class="scode">601101</span><span class="sr">R</span></div>
          <div class="price"><span>6.15</span><span class="change"><svg width="20" height="20" viewBox="0 0 20 20" role="img" aria-label="上涨"><path d="M10 0L20 19H0Z" fill="#ff3232"/></svg>0.12</span><span>1.99%</span></div>
          <div class="blk book">${this.bookTable(SELLS, "卖盘")}</div>
          <div class="blk book buy">${this.bookTable(BUYS, "买盘")}</div>
          <div class="blk s5">${this.statTable(STATS, "行情")}</div>
          <div class="blk s3">${this.statTable(STATS2, "财务")}</div>
          <div class="blk s4"><table class="stats" aria-label="资金流向"><colgroup><col class="wl"><col class="wb"><col class="wv"><col></colgroup>
            ${FLOWS.map(([n, w, v, p, c]) => html`<tr><th scope="row">${rowLabel(n)}</th><td class=${c}><div class="bar" style=${styleMap({ width: `${w}px` })}></div></td><td class=${c}>${amount(v)}</td><td class="${c} last">${p}</td></tr>`)}</table></div>
          <div class="blk"><table aria-label="成交明细"><colgroup><col class="wt"><col class="wtp"><col class="wtv"><col class="wside"><col></colgroup>
            ${TICKS.map(([t, p, v, s, n]) => html`<tr><td class="time">${t}</td><td class="r">${p}</td><td class="y">${amount(v)}</td><td class="side ${s === "B" ? "r" : "g"}">${s}</td><td class="cnt last">${n}</td></tr>`)}</table></div>
        </aside>
        <nav class="strip">
          <div class="sgrp">${STRIP_ICONS.map(stripIcon)}</div>
          <div class="sgrp mid">${STRIP_ICONS2.map(stripIcon)}</div>
          <div class="sgrp">${STRIP_ICONS3.map(stripIcon)}${STRIP_TEXT.map((t) => html`<button class="sbtn ${t === "日" ? "sel" : ""}">${t}</button>`)}</div>
        </nav>
      </div>
      <footer class="status">
        <svg class="sicon" width="22" height="22" viewBox="0 0 22 22" aria-hidden="true"><rect x="1" y="1" width="20" height="20" rx="2" fill="#f5a81c" stroke="#d88a10"/><rect x="6" y="6" width="10" height="9" fill="#ffd870" stroke="#fff" stroke-width="2"/></svg>
        ${INDICES.map(([n, a, b, c, d]) => html`<div class="idx"><span class="nm">${n}</span><span class="up">${a}</span><span class="up">${b}</span>${c ? html`<span class="up">${c}</span><span>${d}<span class="cjk">亿</span></span>` : nothing}</div>`)}
      </footer>
      <div class="banner">
        <span class="site">公式指标网</span>
        <svg class="seal" width="112" height="109" viewBox="0 0 112 109" aria-hidden="true">
          <path d="M10 52A46 46 0 0 1 44 10M69 10A46 46 0 0 1 102 52" fill="none" stroke="#d75f4b" stroke-width="12"/>
          <path d="M102 55A46 46 0 0 1 49 100" fill="none" stroke="#ebcd50" stroke-width="12"/>
          <path fill-rule="evenodd" d="M47 2H66L63 23H78V52H64V36H61V52H36V43H50V36H36V23H50ZM56 5A4 4 0 1 0 56 14A4 4 0 1 0 56 5Z" fill="#ebcd50"/>
          <path d="M36 55H78V64L65 65L68 67H78V73L67 74L69 76H77V82L79 89L65 92L60 68H53L47 92L34 88L37 82V76H44L47 74L36 73V67H45L49 65L36 64Z" fill="#ebcd50"/>
          <path id="arc" d="M6 56A50 50 0 0 0 52 104" fill="none"/>
          <text class="sealtxt"><textPath href="#arc">www.9m8.cn</textPath></text>
        </svg>
        <a class="url" href="#">www.9m8.cn</a>
      </div>
    </div>`;
  }
}
